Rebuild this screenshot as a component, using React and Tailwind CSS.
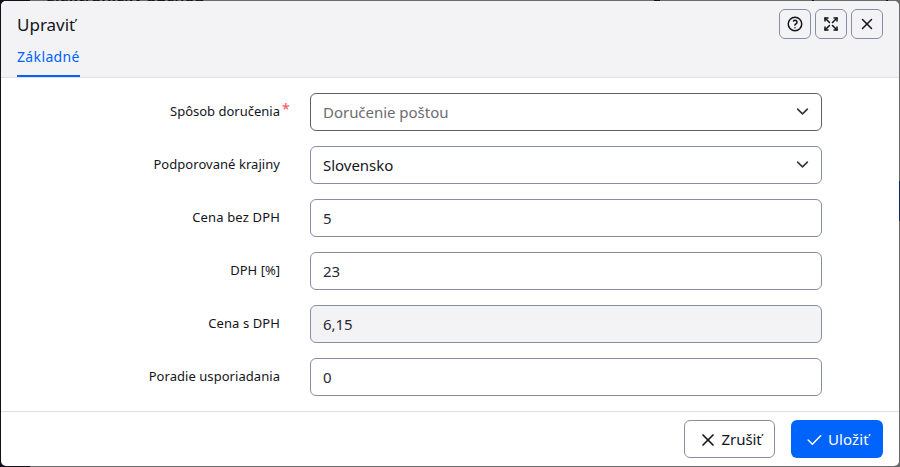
const ICONS = {
  help: ['M12 12m-9 0a9 9 0 1 0 18 0a9 9 0 1 0 -18 0', 'M12 17l0 .01', 'M12 13.5a1.5 1.5 0 0 1 1 -1.5a2.6 2.6 0 1 0 -3 -4'],
  maximize: ['M16 4h4v4', 'M14 10l6 -6', 'M8 20h-4v-4', 'M4 20l6 -6', 'M16 20h4v-4', 'M14 14l6 6', 'M8 4h-4v4', 'M4 4l6 6'],
  close: ['M18 6l-12 12', 'M6 6l12 12'],
  check: ['M5 12l5 5l10 -10'],
  chevron: ['M2 5l6 6l6 -6'],
}

function Icon({ name, className, stroke = 2, box = 24 }) {
  return (
    <svg className={className} viewBox={`0 0 ${box} ${box}`} fill="none" stroke="currentColor" strokeWidth={stroke} strokeLinecap="round" strokeLinejoin="round">
      {ICONS[name].map((d) => <path key={d} d={d} />)}
    </svg>
  )
}

const FIELDS = [
  { label: 'Spôsob doručenia', value: 'Doručenie poštou', required: true, select: true, labelTrack: 'tracking-[0px]', box: 'border-[#606060] text-[#6c6c70]' },
  { label: 'Podporované krajiny', value: 'Slovensko', select: true, labelTrack: 'tracking-[0.05px]', box: 'border-[#868ea5] text-[#13151b]' },
  { label: 'Cena bez DPH', value: '5', labelTrack: 'tracking-[0.16px]', box: 'border-[#868ea5] text-[#272b33]' },
  { label: 'DPH [%]', value: '23', labelTrack: 'tracking-[0px]', box: 'border-[#868ea5] text-[#272b33]' },
  { label: 'Cena s DPH', value: '6,15', labelTrack: 'tracking-[0.1px]', box: 'border-[#868ea5] bg-[#f3f3f6] text-[#272b33]' },
  { label: 'Poradie usporiadania', value: '0', labelTrack: 'tracking-[0.05px]', box: 'border-[#868ea5] text-[#272b33]' },
]

function Field({ field }) {
  return (
    <div className="flex h-[38px] items-center">
      <div className={`relative w-[279px] pb-[3px] text-right text-[13px] leading-5 whitespace-nowrap text-[#13151b] ${field.labelTrack}`}>
        {field.label}
        {field.required && <span className="absolute top-[-2px] left-[281px] text-[14px] text-[#ff4b58]">*</span>}
      </div>
      <div className={`ml-[30px] flex h-[38px] w-[512px] items-center justify-between rounded-md border pr-[12.5px] pl-3 text-[15px] ${field.box}`}>
        <span className="tracking-[-0.03px] whitespace-nowrap">{field.value}</span>
        {field.select && <Icon name="chevron" box={16} className="mb-px size-[13px] text-[#343a40]" />}
      </div>
    </div>
  )
}

export default function App() {
  return (
    <div className="relative flex h-[467px] w-[900px] overflow-hidden bg-[#6b6b6b] px-px pt-px pb-px font-['Noto_Sans','Open_Sans',sans-serif]">
      <div className="absolute top-0 left-0 h-full w-[30px] bg-[#15101d]" />
      <div className="absolute top-[-14px] left-[46px] text-[16px] leading-5 font-semibold whitespace-nowrap text-[#15101d]">Elektronický obchod</div>
      <div className="absolute top-0 left-[654px] h-px w-1.5 bg-[#15101d]" />
      <div className="absolute top-0 left-[812px] h-px w-0.5 bg-[#15101d]" />
      <div className="absolute top-0 left-[886px] h-px w-0.5 bg-[#15101d]" />
      <div className="absolute top-[181px] right-0 h-10 w-1 bg-[#062c63]" />
      <div className="relative flex w-full flex-col overflow-hidden rounded-[5px] bg-white">
        <header className="flex h-[77px] justify-between border-b border-[#dee0e3] bg-[#f3f3f6] pr-4 pl-4">
          <div className="flex flex-col items-start">
            <h1 className="mt-3 text-[17px] leading-6 text-[#13151b]">Upraviť</h1>
            <div className="mt-[10px] h-[30px] w-[63px] border-b-2 border-[#0063fb] text-[14px] leading-5 tracking-[0.36px] whitespace-nowrap text-[#0063fb]">Základné</div>
          </div>
          <div className="mt-2 flex gap-1">
            {['help', 'maximize', 'close'].map((name) => (
              <button key={name} className="flex h-[30px] w-8 items-center justify-center rounded-md border border-[#868ea5] text-[#13151b]">
                <Icon name={name} className="size-[18px]" />
              </button>
            ))}
          </div>
        </header>
        <main className="flex flex-1 flex-col gap-[15px] pt-[15px]">
          {FIELDS.map((field) => <Field key={field.label} field={field} />)}
        </main>
        <footer className="flex h-[55px] justify-end gap-4 border-t border-[#dee0e3] pt-2 pr-4">
          <button className="flex h-[38px] w-[91px] items-center rounded-md border border-[#868ea5] pl-[13px] text-[15px] text-[#13151b]">
            <Icon name="close" className="mt-px size-5" />
            <span className="ml-[3.5px] tracking-[-0.05px]">Zrušiť</span>
          </button>
          <button className="flex h-[38px] w-[92px] items-center rounded-md bg-[#0063fb] pl-[13px] text-[15px] text-white">
            <Icon name="check" className="mt-px size-5" stroke={1.8} />
            <span className="ml-1 tracking-[0.1px]">Uložiť</span>
          </button>
        </footer>
      </div>
    </div>
  )
}
